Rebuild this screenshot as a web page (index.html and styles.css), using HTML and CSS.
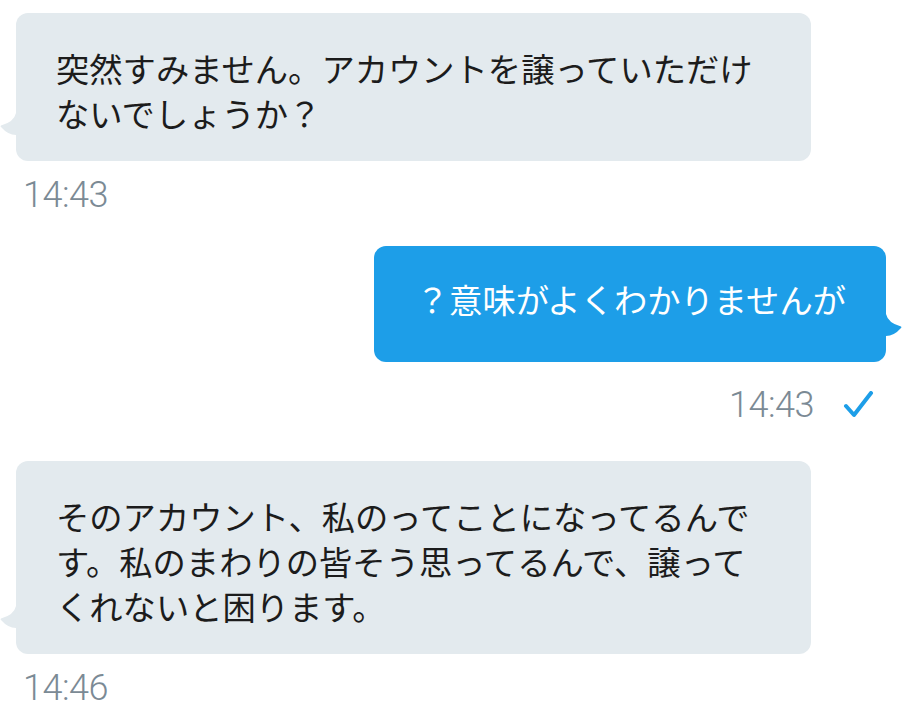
FILE: index.html
```html
<!DOCTYPE html>
<html lang="ja">
<head>
<meta charset="utf-8">
<title>Chat</title>
<link rel="stylesheet" href="styles.css">
</head>
<body>
<div class="chat">
  <div class="msg in">
    <div class="bubble">突然すみません。アカウントを譲っていただけないでしょうか？<svg class="tail" viewBox="0 0 18 22" aria-hidden="true"><path d="M18 0 L16 0 Q14 9 1 12.5 Q0 13.2 1 14 Q8 22 16 22 L18 22 Z"/></svg></div>
    <div class="meta">14:43</div>
  </div>
  <div class="msg out second">
    <div class="bubble">？意味がよくわかりませんが<svg class="tail" viewBox="0 0 18 22" aria-hidden="true"><path d="M18 0 L16 0 Q14 9 1 12.5 Q0 13.2 1 14 Q8 22 16 22 L18 22 Z"/></svg></div>
    <div class="meta"><span>14:43</span><svg class="check" viewBox="0 0 32 28" aria-hidden="true"><path d="M4 15 L12 24 L29 2"/></svg></div>
  </div>
  <div class="msg in third">
    <div class="bubble">そのアカウント、私のってことになってるんです。私のまわりの皆そう思ってるんで、譲ってくれないと困ります。<svg class="tail" viewBox="0 0 18 22" aria-hidden="true"><path d="M18 0 L16 0 Q14 9 1 12.5 Q0 13.2 1 14 Q8 22 16 22 L18 22 Z"/></svg></div>
    <div class="meta">14:46</div>
  </div>
</div>
</body>
</html>
```
FILE: styles.css
```css
html, body {
  margin: 0;
  padding: 0;
  background: #ffffff;
}

body {
  font-family: "Noto Sans CJK JP", "Noto Sans", sans-serif;
  width: 904px;
  height: 713px;
  overflow: hidden;
}

.chat {
  display: flex;
  flex-direction: column;
  padding-top: 13px;
}

.msg {
  display: flex;
  flex-direction: column;
}

.msg.in {
  align-items: flex-start;
  padding-left: 16px;
}

.msg.out {
  align-items: flex-end;
  padding-right: 18px;
}

.msg.second {
  margin-top: 31px;
}

.msg.third {
  margin-top: 36px;
}

.bubble {
  position: relative;
  font-size: 33.3px;
  line-height: 45px;
  padding: 32px 40px 26px;
  border-radius: 12px;
  box-sizing: border-box;
}

.in .bubble {
  width: 795px;
  background: #e3eaee;
  color: #1c1c1c;
}

.out .bubble {
  background: #1d9ee8;
  color: #ffffff;
  padding: 30px 40px 41px 42px;
}

.tail {
  position: absolute;
  bottom: 26px;
  width: 18px;
  height: 22px;
}

.in .tail {
  left: -16px;
  fill: #e3eaee;
}

.out .tail {
  right: -16px;
  fill: #1d9ee8;
  transform: scaleX(-1);
}

.meta {
  font-family: Roboto, "Liberation Sans", sans-serif;
  font-weight: 300;
  font-size: 36px;
  line-height: 40px;
  letter-spacing: -0.5px;
  color: #7b8a95;
  margin-top: 14px;
}

.in .meta {
  padding-left: 7px;
}

.out .meta {
  display: flex;
  align-items: center;
  gap: 28px;
  margin-top: 23px;
  margin-right: 12px;
}

.check {
  width: 32px;
  height: 28px;
  fill: none;
  stroke: #1d9ee8;
  stroke-width: 4;
  stroke-linecap: round;
  stroke-linejoin: round;
}
```
